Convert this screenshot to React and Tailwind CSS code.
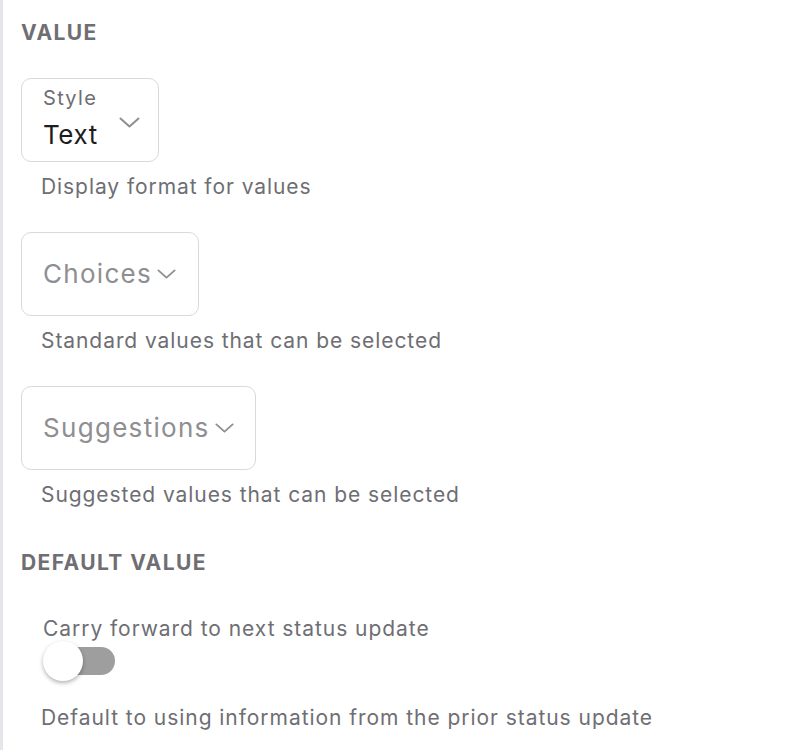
const Chevron = ({ className }) => (
  <svg className={className} viewBox="0 0 21 11" fill="none" stroke="currentColor" strokeWidth={2} strokeLinecap="round" strokeLinejoin="round">
    <path d="M1.5 1.5l9 8 9-8" />
  </svg>
);

function Select({ label, value, placeholder, width }) {
  return (
    <div className={`h-[84px] ${width} rounded-[10px] border border-[#d9d9dc] bg-white flex items-center pl-[21px] pr-[18px]`}>
      {label ? (
        <div className="flex flex-col">
          <span className="text-[20px] leading-[24px] text-[#6e6e73] tracking-[1.3px]">{label}</span>
          <span className="mt-[5px] text-[26px] leading-[40px] text-[#1d1d1f] tracking-[0.6px]">{value}</span>
        </div>
      ) : (
        <span className="text-[26px] leading-[34px] text-[#8e8e93] tracking-[1.3px]">{placeholder}</span>
      )}
      {label ? (
        <Chevron className="ml-auto mt-[5px] w-[21px] h-[11px] text-[#8e8e93]" />
      ) : (
        <Chevron className="ml-[5px] w-[19px] h-[10px] text-[#8e8e93]" />
      )}
    </div>
  );
}

function Field({ children, help }) {
  return (
    <div className="flex flex-col">
      {children}
      <p className="text-[21px] leading-[24px] text-[#6e6e73] mt-[13px] ml-[20px] tracking-[0.93px]">{help}</p>
    </div>
  );
}

export default function App() {
  return (
    <div className="w-[798px] h-[750px] bg-white overflow-hidden font-['Inter',sans-serif]">
      <div className="h-full border-l-[3px] border-[#e5e5ea] pl-[18px] pt-[21px]">
        <h2 className="text-[21px] leading-[24px] font-bold text-[#6e6e73] tracking-[1.4px]">VALUE</h2>
        <div className="mt-[33px] flex flex-col gap-[33px]">
          <Field help="Display format for values">
            <Select label="Style" value="Text" width="w-[138px]" />
          </Field>
          <Field help="Standard values that can be selected">
            <Select placeholder="Choices" width="w-[178px]" />
          </Field>
          <Field help="Suggested values that can be selected">
            <Select placeholder="Suggestions" width="w-[235px]" />
          </Field>
        </div>
        <h2 className="mt-[44px] text-[21px] leading-[24px] font-bold text-[#6e6e73] tracking-[1.4px]">DEFAULT VALUE</h2>
        <div className="mt-[42px] pl-[22px]">
          <p className="text-[21px] leading-[24px] text-[#6e6e73] tracking-[0.95px]">Carry forward to next status update</p>
          <div className="relative mt-0 h-[40px] w-[74px]">
            <div className="absolute left-[2px] top-[6px] h-[28px] w-[70px] rounded-full bg-[#9e9e9e]" />
            <div className="absolute left-0 top-0 h-[40px] w-[40px] rounded-full bg-white shadow-[0_2px_4px_rgba(0,0,0,0.3)]" />
          </div>
          <p className="mt-[25px] -ml-[2px] text-[21px] leading-[24px] text-[#6e6e73] tracking-[0.95px]">Default to using information from the prior status update</p>
        </div>
      </div>
    </div>
  );
}
